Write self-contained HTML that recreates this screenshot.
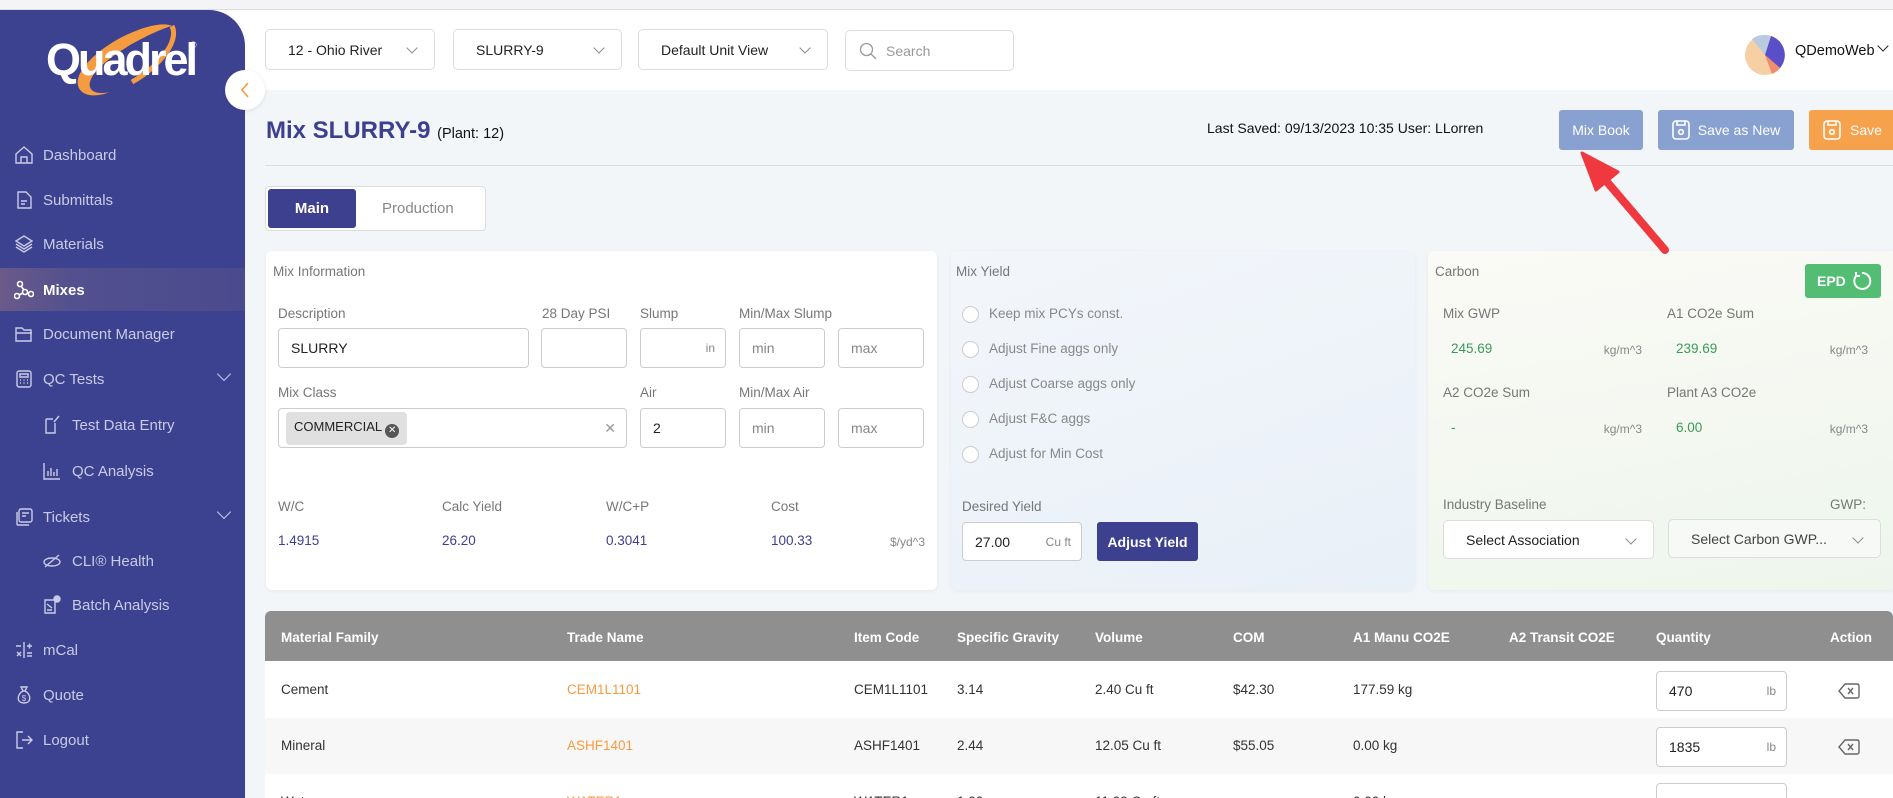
<!DOCTYPE html>
<html><head><meta charset="utf-8">
<style>
*{box-sizing:border-box;margin:0;padding:0}
html,body{width:1893px;height:798px;overflow:hidden}
body{background:#f3f6f9;font-family:"Liberation Sans",sans-serif;color:#222}
#w{position:relative;width:1893px;height:798px;overflow:hidden}
.a{position:absolute}
.topstrip{left:0;top:0;width:1893px;height:10px;background:#f4f4f6;border-bottom:1px solid #ddd}
.topbar{left:0;top:10px;width:1893px;height:80px;background:#fff}
.side{left:0;top:10px;width:245px;height:788px;background:#3d4290;border-top-right-radius:36px}
.nav{position:absolute;left:0;width:245px;height:40px;color:#c9cbe6;font-size:15px;display:flex;align-items:center}
.nav svg{position:absolute;left:14px;width:20px;height:20px}
.nav span{position:absolute;left:43px}
.nav.sub svg{left:42px}.nav.sub span{left:72px}
.chev{position:absolute;right:16px;width:10px;height:10px;border-right:1.6px solid #c9cbe6;border-bottom:1.6px solid #c9cbe6;transform:rotate(45deg);top:10px}
.dd{height:41px;border:1px solid #ddd;border-radius:5px;background:#fff;font-size:14px;display:flex;align-items:center;padding-left:22px;color:#222}
.dd .c{position:absolute;right:18px;top:14px;width:8px;height:8px;border-right:1.3px solid #888;border-bottom:1.3px solid #888;transform:rotate(45deg)}
.card{background:#fff;border-radius:6px;box-shadow:0 1px 4px rgba(0,0,0,.06)}
.lbl{font-size:13.5px;color:#777}
.inp{height:40px;border:1px solid #ccc;border-radius:4px;background:#fff;font-size:14px;display:flex;align-items:center;padding-left:12px;color:#222}
.ph{color:#888}
.val{font-size:13.5px;color:#3d3f8f}
.unit{font-size:12px;color:#888}
.g{font-size:13.5px;color:#3a9a5a}
.radio{width:17px;height:17px;border-radius:50%;border:1px solid #ccc;background:#fff}
.rt{font-size:13.5px;color:#888}
.th{font-size:13.5px;color:#fff;font-weight:bold;top:630px}
.td{font-size:13.5px;color:#333}
.btn{border-radius:3px;color:#fff;font-size:14px;font-weight:bold;display:flex;align-items:center;justify-content:center}
</style></head><body><div id="w">
<div class="a topstrip"></div>
<div class="a topbar"></div>

<div class="a dd" style="left:265px;top:29px;width:170px">12 - Ohio River<i class="c"></i></div>
<div class="a dd" style="left:453px;top:29px;width:169px">SLURRY-9<i class="c"></i></div>
<div class="a dd" style="left:638px;top:29px;width:190px">Default Unit View<i class="c"></i></div>
<div class="a dd" style="left:845px;top:30px;width:169px;padding-left:40px;color:#999">Search
<svg class="a" style="left:13px;top:11px" width="18" height="18" viewBox="0 0 18 18"><circle cx="7.5" cy="7.5" r="6" fill="none" stroke="#999" stroke-width="1.3"/><path d="M12 12l5 5" stroke="#999" stroke-width="1.3"/></svg></div>

<svg class="a" style="left:1744px;top:34px" width="42" height="42" viewBox="0 0 42 42"><circle cx="21" cy="21" r="20" fill="#f6cfa5"/><path d="M21 21 L8 5 A20 20 0 0 1 27 2 Z" fill="#b8cbe0"/><path d="M21 21 L27 2 A20 20 0 0 1 36 34 Z" fill="#5a4fc9"/><path d="M21 21 L36 34 A20 20 0 0 1 28 40 Z" fill="#f08c6c"/></svg>
<div class="a" style="left:1795px;top:43px;font-size:14.5px;color:#111">QDemoWeb</div>
<div class="a" style="left:1879px;top:42px;width:8px;height:8px;border-right:1.5px solid #222;border-bottom:1.5px solid #222;transform:rotate(45deg)"></div>

<div class="a side"></div>
<div class="a" style="left:0;top:268px;width:245px;height:43px;background:linear-gradient(90deg,#6a5a8a 0%,#52508e 30%,#4a4a8e 100%)"></div>
<svg class="a" style="left:62px;top:22px" width="120" height="80" viewBox="0 0 120 80"><path d="M110 4 C 95 -4, 40 18, 20 48 C 8 66, 22 80, 48 70 C 30 74, 22 66, 32 52 C 50 28, 100 6, 110 4Z" fill="#f59c40"/><path d="M110 4 C 118 20, 95 46, 70 60" fill="none" stroke="#f59c40" stroke-width="5"/></svg>
<div class="a" style="left:46px;top:34px;font-size:45px;color:#fff;font-weight:bold;letter-spacing:-3px">Quadrel</div>
<div class="a" style="left:190px;top:40px;font-size:9px;color:#fff">®</div>

<div class="nav" style="top:135px"><svg viewBox="0 0 20 20" fill="none" stroke="#c9cbe6" stroke-width="1.4"><path d="M2 9 L10 2 L18 9 V18 H2Z M7 18 V12 H13 V18"/></svg><span>Dashboard</span></div>
<div class="nav" style="top:180px"><svg viewBox="0 0 20 20" fill="none" stroke="#c9cbe6" stroke-width="1.4"><path d="M4 2 H12 L17 7 V18 H4Z M7 11 H13 M7 14 H11"/></svg><span>Submittals</span></div>
<div class="nav" style="top:224px"><svg viewBox="0 0 20 20" fill="none" stroke="#c9cbe6" stroke-width="1.4"><path d="M10 2 L18 7 L10 12 L2 7Z M2 10 L10 15 L18 10 M2 13 L10 18 L18 13"/></svg><span>Materials</span></div>
<div class="nav" style="top:270px;color:#fff;font-weight:bold"><svg viewBox="0 0 20 20" fill="none" stroke="#fff" stroke-width="1.6"><circle cx="6" cy="4" r="2.5"/><circle cx="3" cy="16" r="2.5"/><circle cx="11" cy="12" r="2.5"/><circle cx="17" cy="14" r="2.5"/><path d="M7 6 L10 10 M5 15 L9 13 M13 13 L15 14"/></svg><span>Mixes</span></div>
<div class="nav" style="top:314px"><svg viewBox="0 0 20 20" fill="none" stroke="#c9cbe6" stroke-width="1.4"><path d="M2 4 H8 L10 6 H17 V17 H2Z M2 9 H18"/></svg><span>Document Manager</span></div>
<div class="nav" style="top:359px"><svg viewBox="0 0 20 20" fill="none" stroke="#c9cbe6" stroke-width="1.4"><rect x="3" y="2" width="14" height="16" rx="2"/><path d="M6 5 H14 V8 H6Z M6 11 H7 M9.5 11 H10.5 M13 11 H14 M6 14 H7 M9.5 14 H10.5 M13 14 H14"/></svg><span>QC Tests</span><i class="chev"></i></div>
<div class="nav sub" style="top:405px"><svg viewBox="0 0 20 20" fill="none" stroke="#c9cbe6" stroke-width="1.4"><path d="M4 4 V18 H13 V8 M4 4 H11 M17 1 L12 7"/></svg><span>Test Data Entry</span></div>
<div class="nav sub" style="top:451px"><svg viewBox="0 0 20 20" fill="none" stroke="#c9cbe6" stroke-width="1.4"><path d="M2 2 V18 H18 M6 15 V10 M9 15 V7 M12 15 V11 M15 15 V8"/></svg><span>QC Analysis</span></div>
<div class="nav" style="top:497px"><svg viewBox="0 0 20 20" fill="none" stroke="#c9cbe6" stroke-width="1.4"><rect x="5" y="2" width="13" height="13" rx="2"/><path d="M3 5 V17 Q3 18 4 18 H15 M8 6 H15 M8 9 H12"/></svg><span>Tickets</span><i class="chev"></i></div>
<div class="nav sub" style="top:541px"><svg viewBox="0 0 20 20" fill="none" stroke="#c9cbe6" stroke-width="1.4"><ellipse cx="10" cy="11" rx="8" ry="4"/><path d="M3 16 L17 4"/></svg><span>CLI® Health</span></div>
<div class="nav sub" style="top:585px"><svg viewBox="0 0 20 20" fill="none" stroke="#c9cbe6" stroke-width="1.4"><path d="M3 5 H13 V18 H3Z M5 9 L10 13 M5 15 H10"/><circle cx="15" cy="4" r="3" fill="#c9cbe6"/></svg><span>Batch Analysis</span></div>
<div class="nav" style="top:630px"><svg viewBox="0 0 20 20" fill="none" stroke="#c9cbe6" stroke-width="1.4"><path d="M10 2 V18 M2 6 H7 M13 6 H18 M15.5 3.5 V8.5 M3 12 L7 16 M7 12 L3 16 M13 13 H18 M13 16 H18"/></svg><span>mCal</span></div>
<div class="nav" style="top:675px"><svg viewBox="0 0 20 20" fill="none" stroke="#c9cbe6" stroke-width="1.4"><path d="M7 2 H13 L11 6 H9Z M9 6 C3 9 2 18 10 18 C18 18 17 9 11 6"/><text x="10" y="16" font-size="8" text-anchor="middle" fill="#c9cbe6" stroke="none">$</text></svg><span>Quote</span></div>
<div class="nav" style="top:720px"><svg viewBox="0 0 20 20" fill="none" stroke="#c9cbe6" stroke-width="1.4"><path d="M9 2 H3 V18 H9 M8 10 H18 M14 6 L18 10 L14 14"/></svg><span>Logout</span></div>

<div class="a" style="left:225px;top:70px;width:40px;height:40px;border-radius:50%;background:#fff;box-shadow:0 1px 4px rgba(0,0,0,.1)"></div>
<svg class="a" style="left:238px;top:80px" width="14" height="20" viewBox="0 0 14 20"><path d="M10 3 L4 10 L10 17" fill="none" stroke="#f59c40" stroke-width="1.6"/></svg>

<div class="a" style="left:266px;top:117px;font-size:24px;font-weight:bold;color:#3d3f8f">Mix SLURRY-9 <span style="font-size:14.5px;font-weight:normal;color:#111">(Plant: 12)</span></div>
<div class="a" style="left:1207px;top:120px;font-size:14px;color:#111">Last Saved: 09/13/2023 10:35 User: LLorren</div>
<div class="a btn" style="left:1559px;top:110px;width:84px;height:40px;background:#89a1d0;font-weight:normal">Mix Book</div>
<div class="a btn" style="left:1658px;top:110px;width:136px;height:40px;background:#89a1d0;font-weight:normal;padding-left:26px">Save as New
<svg class="a" style="left:13px;top:9px" width="20" height="22" viewBox="0 0 20 22"><rect x="2" y="2" width="16" height="18" rx="3" fill="none" stroke="#fff" stroke-width="1.6"/><path d="M6 2 V6 H14 V2" fill="none" stroke="#fff" stroke-width="1.6"/><circle cx="10" cy="13" r="2.3" fill="none" stroke="#fff" stroke-width="1.6"/></svg></div>
<div class="a btn" style="left:1809px;top:110px;width:90px;height:40px;background:#f6a14b;font-weight:normal;justify-content:flex-start;padding-left:41px">Save
<svg class="a" style="left:13px;top:9px" width="20" height="22" viewBox="0 0 20 22"><rect x="2" y="2" width="16" height="18" rx="3" fill="none" stroke="#fff" stroke-width="1.6"/><path d="M6 2 V6 H14 V2" fill="none" stroke="#fff" stroke-width="1.6"/><circle cx="10" cy="13" r="2.3" fill="none" stroke="#fff" stroke-width="1.6"/></svg></div>
<div class="a" style="left:265px;top:165px;width:1628px;height:1px;background:#d9dce0"></div>

<div class="a" style="left:265px;top:186px;width:221px;height:45px;border:1px solid #ddd;border-radius:4px;background:#fff"></div>
<div class="a btn" style="left:268px;top:189px;width:88px;height:39px;background:#3d3f8f;font-size:15px">Main</div>
<div class="a" style="left:382px;top:200px;font-size:15px;color:#888">Production</div>

<div class="a card" style="left:266px;top:251px;width:671px;height:339px"></div>
<div class="a lbl" style="left:273px;top:264px">Mix Information</div>
<div class="a lbl" style="left:278px;top:306px">Description</div>
<div class="a lbl" style="left:542px;top:306px">28 Day PSI</div>
<div class="a lbl" style="left:640px;top:306px">Slump</div>
<div class="a lbl" style="left:739px;top:306px">Min/Max Slump</div>
<div class="a inp" style="left:278px;top:328px;width:251px">SLURRY</div>
<div class="a inp" style="left:541px;top:328px;width:86px"></div>
<div class="a inp" style="left:640px;top:328px;width:86px;justify-content:flex-end;padding-right:10px"><span class="unit">in</span></div>
<div class="a inp ph" style="left:739px;top:328px;width:86px">min</div>
<div class="a inp ph" style="left:838px;top:328px;width:86px">max</div>
<div class="a lbl" style="left:278px;top:385px">Mix Class</div>
<div class="a lbl" style="left:640px;top:385px">Air</div>
<div class="a lbl" style="left:739px;top:385px">Min/Max Air</div>
<div class="a inp" style="left:278px;top:408px;width:349px;padding-left:7px"><span style="background:#e0e0e0;border-radius:4px;padding:7px 8px;font-size:13px;white-space:nowrap">COMMERCIAL <span style="display:inline-block;width:14px;height:14px;border-radius:50%;background:#555;color:#fff;font-size:10px;text-align:center;line-height:14px;vertical-align:-2px">✕</span></span><span class="a" style="right:10px;top:11px;color:#999;font-size:14px">✕</span></div>
<div class="a inp" style="left:640px;top:408px;width:86px">2</div>
<div class="a inp ph" style="left:739px;top:408px;width:86px">min</div>
<div class="a inp ph" style="left:838px;top:408px;width:86px">max</div>
<div class="a lbl" style="left:278px;top:499px">W/C</div>
<div class="a lbl" style="left:442px;top:499px">Calc Yield</div>
<div class="a lbl" style="left:606px;top:499px">W/C+P</div>
<div class="a lbl" style="left:771px;top:499px">Cost</div>
<div class="a val" style="left:278px;top:533px">1.4915</div>
<div class="a val" style="left:442px;top:533px">26.20</div>
<div class="a val" style="left:606px;top:533px">0.3041</div>
<div class="a val" style="left:771px;top:533px">100.33</div>
<div class="a unit" style="left:870px;top:535px;width:55px;text-align:right">$/yd^3</div>

<div class="a card" style="left:951px;top:251px;width:464px;height:339px;background:linear-gradient(160deg,#f3f6fa,#e8f0f8)"></div>
<div class="a lbl" style="left:956px;top:264px">Mix Yield</div>
<div class="a radio" style="left:962px;top:306px"></div><div class="a rt" style="left:989px;top:306px">Keep mix PCYs const.</div>
<div class="a radio" style="left:962px;top:341px"></div><div class="a rt" style="left:989px;top:341px">Adjust Fine aggs only</div>
<div class="a radio" style="left:962px;top:376px"></div><div class="a rt" style="left:989px;top:376px">Adjust Coarse aggs only</div>
<div class="a radio" style="left:962px;top:411px"></div><div class="a rt" style="left:989px;top:411px">Adjust F&amp;C aggs</div>
<div class="a radio" style="left:962px;top:446px"></div><div class="a rt" style="left:989px;top:446px">Adjust for Min Cost</div>
<div class="a lbl" style="left:962px;top:499px">Desired Yield</div>
<div class="a inp" style="left:962px;top:522px;width:120px;height:39px">27.00<span class="a unit" style="right:10px;top:12px">Cu ft</span></div>
<div class="a btn" style="left:1097px;top:522px;width:101px;height:39px;background:#3d3f8f">Adjust Yield</div>

<div class="a card" style="left:1428px;top:251px;width:470px;height:339px;background:linear-gradient(170deg,#fbfaf6,#edf6ec)"></div>
<div class="a lbl" style="left:1435px;top:264px">Carbon</div>
<div class="a btn" style="left:1805px;top:264px;width:76px;height:34px;background:#52bd73;justify-content:flex-start;padding-left:12px">EPD
<svg class="a" style="left:46px;top:6px" width="22" height="22" viewBox="0 0 22 22"><path d="M6 5 A8 8 0 1 0 11 3" fill="none" stroke="#fff" stroke-width="2"/><path d="M5 2 V6 H9" fill="none" stroke="#fff" stroke-width="2"/></svg></div>
<div class="a lbl" style="left:1443px;top:306px">Mix GWP</div>
<div class="a lbl" style="left:1667px;top:306px">A1 CO2e Sum</div>
<div class="a g" style="left:1451px;top:341px">245.69</div>
<div class="a unit" style="left:1590px;top:343px;width:52px;text-align:right">kg/m^3</div>
<div class="a g" style="left:1676px;top:341px">239.69</div>
<div class="a unit" style="left:1816px;top:343px;width:52px;text-align:right">kg/m^3</div>
<div class="a lbl" style="left:1443px;top:385px">A2 CO2e Sum</div>
<div class="a lbl" style="left:1667px;top:385px">Plant A3 CO2e</div>
<div class="a g" style="left:1451px;top:420px">-</div>
<div class="a unit" style="left:1590px;top:422px;width:52px;text-align:right">kg/m^3</div>
<div class="a g" style="left:1676px;top:420px">6.00</div>
<div class="a unit" style="left:1816px;top:422px;width:52px;text-align:right">kg/m^3</div>
<div class="a lbl" style="left:1443px;top:497px">Industry Baseline</div>
<div class="a lbl" style="left:1830px;top:497px">GWP:</div>
<div class="a dd" style="left:1443px;top:520px;width:211px;height:39px;padding-left:22px">Select Association<i class="c"></i></div>
<div class="a dd" style="left:1668px;top:519px;width:213px;height:39px;padding-left:22px;background:#f6f9f5;color:#444">Select Carbon GWP...<i class="c"></i></div>

<div class="a" style="left:265px;top:611px;width:1628px;height:200px;border-radius:6px 6px 0 0;overflow:hidden;background:#fff">
 <div class="a" style="left:0;top:0;width:1628px;height:50px;background:#8f8f8f"></div>
 <div class="a" style="left:0;top:107px;width:1628px;height:56px;background:#f7f7f7"></div>
</div>
<div class="a th" style="left:281px">Material Family</div>
<div class="a th" style="left:567px">Trade Name</div>
<div class="a th" style="left:854px">Item Code</div>
<div class="a th" style="left:957px">Specific Gravity</div>
<div class="a th" style="left:1095px">Volume</div>
<div class="a th" style="left:1233px">COM</div>
<div class="a th" style="left:1353px">A1 Manu CO2E</div>
<div class="a th" style="left:1509px">A2 Transit CO2E</div>
<div class="a th" style="left:1656px">Quantity</div>
<div class="a th" style="left:1830px">Action</div>

<div class="a td" style="left:281px;top:682px">Cement</div>
<div class="a td" style="left:567px;top:682px;color:#f59c40">CEM1L1101</div>
<div class="a td" style="left:854px;top:682px">CEM1L1101</div>
<div class="a td" style="left:957px;top:682px">3.14</div>
<div class="a td" style="left:1095px;top:682px">2.40 Cu ft</div>
<div class="a td" style="left:1233px;top:682px">$42.30</div>
<div class="a td" style="left:1353px;top:682px">177.59 kg</div>
<div class="a inp" style="left:1656px;top:671px;width:131px">470<span class="a unit" style="right:10px;top:12px">lb</span></div>

<div class="a td" style="left:281px;top:738px">Mineral</div>
<div class="a td" style="left:567px;top:738px;color:#f59c40">ASHF1401</div>
<div class="a td" style="left:854px;top:738px">ASHF1401</div>
<div class="a td" style="left:957px;top:738px">2.44</div>
<div class="a td" style="left:1095px;top:738px">12.05 Cu ft</div>
<div class="a td" style="left:1233px;top:738px">$55.05</div>
<div class="a td" style="left:1353px;top:738px">0.00 kg</div>
<div class="a inp" style="left:1656px;top:727px;width:131px">1835<span class="a unit" style="right:10px;top:12px">lb</span></div>

<div class="a td" style="left:281px;top:794px">Water</div>
<div class="a td" style="left:567px;top:794px;color:#f59c40">WATER1</div>
<div class="a td" style="left:854px;top:794px">WATER1</div>
<div class="a td" style="left:957px;top:794px">1.00</div>
<div class="a td" style="left:1095px;top:794px">11.99 Cu ft</div>
<div class="a td" style="left:1353px;top:794px">0.00 kg</div>
<div class="a inp" style="left:1656px;top:783px;width:131px">316</div>

<svg class="a" style="left:1838px;top:682px" width="22" height="18" viewBox="0 0 22 18"><path d="M7 2 H19 Q21 2 21 4 V14 Q21 16 19 16 H7 L1 9Z" fill="none" stroke="#666" stroke-width="1.4"/><path d="M10 6 L15 12 M15 6 L10 12" stroke="#666" stroke-width="1.4"/></svg>
<svg class="a" style="left:1838px;top:738px" width="22" height="18" viewBox="0 0 22 18"><path d="M7 2 H19 Q21 2 21 4 V14 Q21 16 19 16 H7 L1 9Z" fill="none" stroke="#666" stroke-width="1.4"/><path d="M10 6 L15 12 M15 6 L10 12" stroke="#666" stroke-width="1.4"/></svg>

<svg class="a" style="left:1560px;top:140px" width="120" height="130" viewBox="0 0 120 130"><path d="M105 110 L42 36" stroke="#f0393f" stroke-width="8" stroke-linecap="round"/><path d="M22 13 L58 32 L36 50Z" fill="#f0393f" stroke="#f0393f" stroke-width="3" stroke-linejoin="round"/></svg>
</div></body></html>
